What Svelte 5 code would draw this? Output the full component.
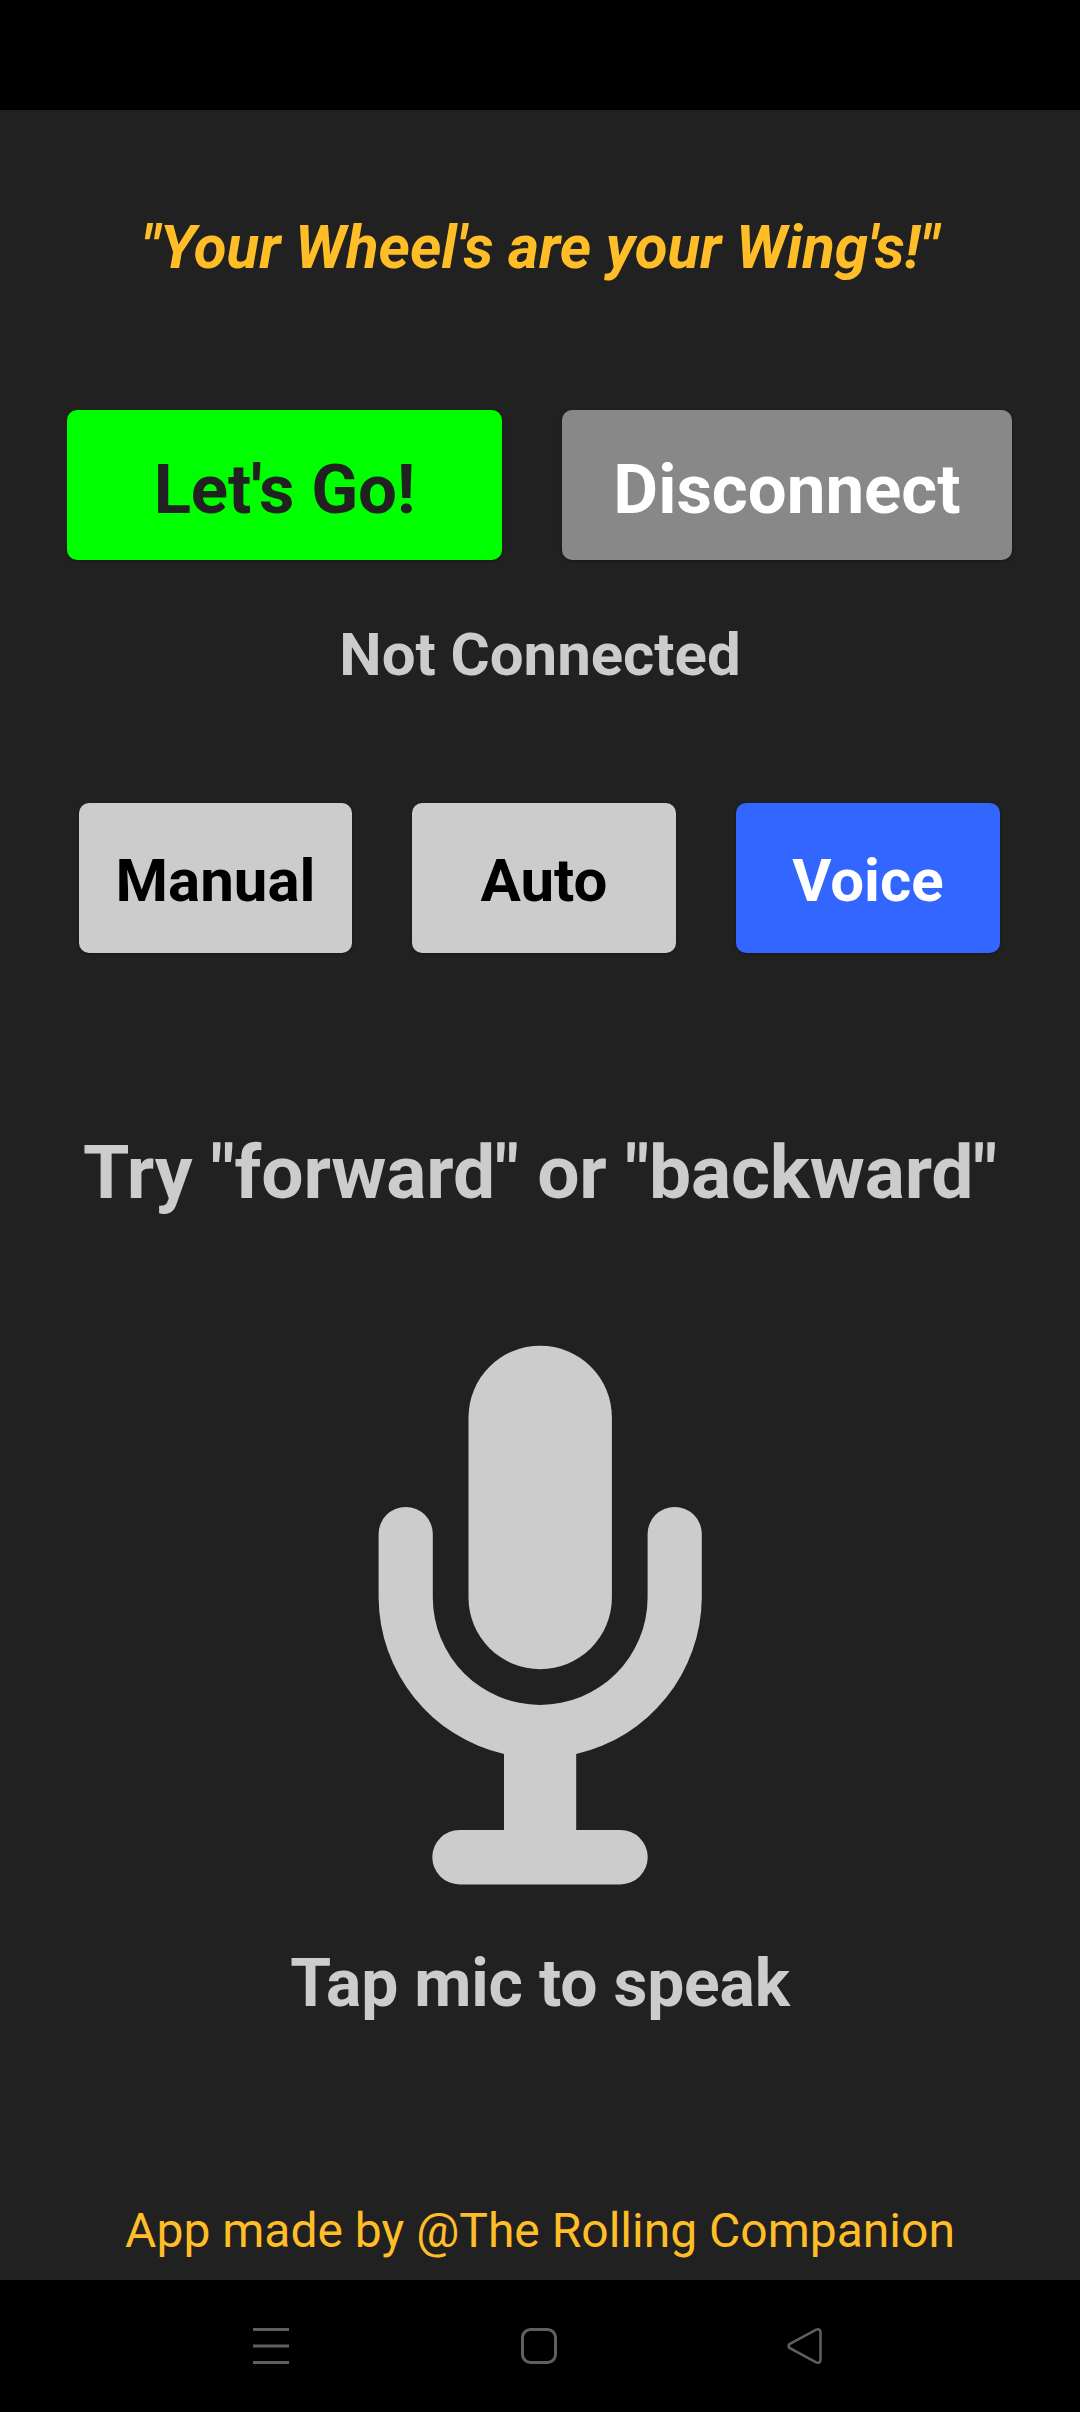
<script>
  let mode = $state('Voice');
  const modes = ['Manual', 'Auto', 'Voice'];
</script>

<div class="screen">
  <div class="status"></div>
  <main>
    <h1>"Your Wheel's are your Wing's!"</h1>
    <div class="row connect">
      <button class="go">Let's Go!</button>
      <button class="disconnect">Disconnect</button>
    </div>
    <p class="state">Not Connected</p>
    <div class="row modes">
      {#each modes as m}
        <button class="mode" class:wide={m === 'Manual'} class:active={mode === m} onclick={() => (mode = m)}>{m}</button>
      {/each}
    </div>
    <p class="hint">Try "forward" or "backward"</p>
    <svg class="mic" viewBox="360 1340 360 550" width="360" height="550">
      <rect x="468.5" y="1345.7" width="143.4" height="323.5" rx="71.7" />
      <path d="M378.6 1534a27.1 27.1 0 0 1 54.2 0V1597.5a107.4 107.4 0 0 0 214.8 0V1534a27.1 27.1 0 0 1 54.2 0V1597.5A161.7 161.7 0 0 1 576.2 1754V1830H620.5a27.2 27.2 0 0 1 0 54.4H459.5a27.2 27.2 0 0 1 0-54.4H504V1754A161.7 161.7 0 0 1 378.6 1597.5Z" />
    </svg>
    <p class="tap">Tap mic to speak</p>
    <footer>App made by @The Rolling Companion</footer>
  </main>
  <nav>
    <svg viewBox="0 0 40 40" width="40" height="40"><path d="M2 3.5H38M2 20H38M2 36.5H38" /></svg>
    <svg class="home" viewBox="0 0 40 40" width="40" height="40"><rect x="3.5" y="3.5" width="33" height="33" rx="8" /></svg>
    <svg class="back" viewBox="0 0 40 40" width="40" height="40"><path class="thin" d="M4.9 17.8 31.2 3.6Q35.3 2.2 35.5 6.4V33.6Q35.3 37.8 31.2 36.4L4.9 22.2Q2.1 20 4.9 17.8Z" /></svg>
  </nav>
</div>

<style>
  :global(body) { margin: 0; background: #000; }
  .screen {
    width: 1080px;
    height: 2412px;
    display: flex;
    flex-direction: column;
    background: #000;
    font-family: Roboto, sans-serif;
    color: #ccc;
  }
  .status { height: 110px; }
  main {
    height: 2170px;
    display: flex;
    flex-direction: column;
    align-items: center;
    background: #212121;
    white-space: nowrap;
  }
  h1, p { margin: 0; font-weight: 700; }
  h1 {
    font-size: 60px;
    line-height: 275px;
    font-style: italic;
    letter-spacing: -0.05px;
    color: #ffbd27;
  }
  .row { display: flex; justify-content: center; gap: 60px; margin-right: 1px; }
  .connect { margin-top: 25px; }
  button {
    box-sizing: border-box;
    height: 150px;
    border: 0;
    border-radius: 10px;
    font: 700 60px Roboto, sans-serif;
    box-shadow: 0 1px 3px rgba(0, 0, 0, 0.35);
  }
  .go, .disconnect { padding: 9px 0 0; font-size: 69px; }
  .go { width: 435px; background: #0f0; color: #212121; letter-spacing: -0.2px; }
  .disconnect { width: 450px; background: #888; color: #fff; }
  .state { font-size: 60px; line-height: 189px; letter-spacing: -0.05px; }
  .modes { margin-top: 54px; }
  .mode { width: 264px; padding: 5px 0 0; background: #ccc; color: #000; }
  .mode.wide { width: 273px; }
  .mode.active { background: #36f; color: #fff; }
  .hint { margin-top: 159px; font-size: 75px; line-height: 120px; letter-spacing: -0.15px; }
  .mic { display: block; margin-top: 108px; fill: #ccc; }
  .tap { margin-top: 44px; font-size: 66px; line-height: 100px; letter-spacing: -0.2px; }
  footer {
    margin-top: auto;
    font-size: 48px;
    line-height: 99px;
    color: #ffbd27;
  }
  nav {
    height: 132px;
    display: flex;
    align-items: center;
    padding-left: 251px;
  }
  nav svg { fill: none; stroke: #606060; stroke-width: 3; }
  .home { margin-left: 228px; }
  .back { margin-left: 226px; }
  nav .thin { stroke-width: 2.5; }
</style>
